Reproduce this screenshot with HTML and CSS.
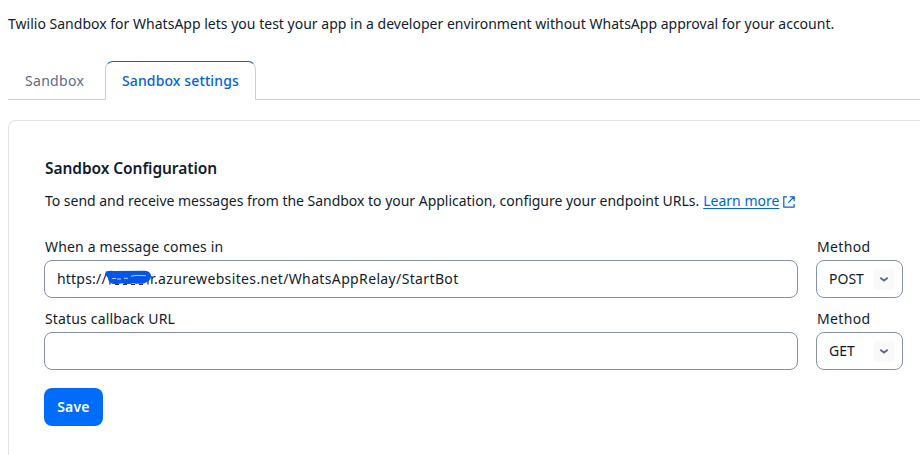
FILE: index.html
```html
<!DOCTYPE html>
<html lang="en">
<head>
<meta charset="utf-8">
<title>Sandbox settings</title>
<link rel="stylesheet" href="styles.css">
</head>
<body>
<main class="page">
  <p class="intro">Twilio Sandbox for WhatsApp lets you test your app in a developer environment without WhatsApp approval for your account.</p>
  <nav class="tabs">
    <a class="tab">Sandbox</a>
    <a class="tab tab-active">Sandbox settings</a>
  </nav>
  <section class="card">
    <h2 class="title">Sandbox Configuration</h2>
    <p class="help"><span class="help-text">To send and receive messages from the Sandbox to your Application, configure your endpoint URLs.</span><a class="link">Learn more</a><svg class="external" viewBox="0 0 12 12" width="12" height="12" fill="none" stroke="currentColor" stroke-width="1.2"><path d="M4 .9H.8v10.3h10.3V8M6.800.8h4.400v4.400M11 1 5.300 6.700"/></svg></p>
    <div class="row">
      <div class="field">
        <label class="label">When a message comes in</label>
        <div class="control"><span class="scheme">https://</span><span class="redacted"><svg class="scribble" viewBox="0 0 48 17" width="48" height="17"><path fill="none" stroke="#26324a" stroke-width="1.3" d="M5 11v3.500M10 14.300h4M18 14.300h4M26 14.300h4M34 14.300h4M43 9v5.500"/><path fill="#0455e8" d="M1 1.500Q4 .5 9 1L40 .8Q46 1.500 46 6 46 10 42 12L38 13.800H31L28 13 25 14H20L17 13.200 13 14H8Q3 12 3 8L0 4Z"/><path fill="none" stroke="#c9dcff" stroke-width=".9" d="M7 8.500h4m1 .5h4m3-.7h4M26 6.200l5-.8 10 .3"/></svg></span><span class="host">r.azurewebsites.net/WhatsAppRelay/StartBot</span></div>
      </div>
      <div class="method">
        <label class="label label-method">Method</label>
        <div class="control select"><span>POST</span><span class="chevron"><svg viewBox="0 0 20 20" width="20" height="20"><path d="m6.900 9.200 3.100 2.400 3.100-2.400"/></svg></span></div>
      </div>
    </div>
    <div class="row">
      <div class="field">
        <label class="label">Status callback URL</label>
        <div class="control"></div>
      </div>
      <div class="method">
        <label class="label label-method">Method</label>
        <div class="control select"><span>GET</span><span class="chevron"><svg viewBox="0 0 20 20" width="20" height="20"><path d="m6.900 9.200 3.100 2.400 3.100-2.400"/></svg></span></div>
      </div>
    </div>
    <button class="save">Save</button>
  </section>
</main>
</body>
</html>
```
FILE: styles.css
```css
* { box-sizing: border-box; }
body {
  margin: 0;
  height: 455px;
  overflow: hidden;
  background: #fff;
  color: #121c2d;
  font: 14px/20px "Noto Sans", "Open Sans", sans-serif;
  white-space: nowrap;
}
.page { padding: 14px 0 0 8px; }
p, h2 { margin: 0; }
.intro { height: 47px; letter-spacing: .012px; }
.tabs {
  display: flex;
  height: 39px;
  border-bottom: 1px solid #cacdd8;
}
.tab {
  width: 97px;
  height: 39px;
  padding: 10px 0 0 17px;
  color: #606b85;
  letter-spacing: .3px;
}
.tab-active {
  width: 151px;
  padding: 9px 0 0 16px;
  border: 1px solid #cacdd8;
  border-top-color: #0263e0;
  border-bottom-color: #fff;
  border-radius: 8px 8px 0 0;
  background: #fff;
  color: #0263e0;
  font-weight: 500;
  letter-spacing: .12px;
}
.card {
  margin: 20px -20px 0 0;
  height: 335px;
  padding: 37px 36px 0 35px;
  border: 1px solid #e1e3ea;
  border-bottom: 0;
  border-radius: 8px 8px 0 0;
}
.title { padding-left: 1px; font-size: 15.5px; font-weight: 600; line-height: 20px; letter-spacing: -.07px; }
.help { display: flex; height: 46px; margin: 13px 0 0 1px; }
.help-text { letter-spacing: -.02px; }
.link { margin-left: 4px; color: #0263e0; text-decoration: underline; text-underline-offset: 2px; text-decoration-thickness: 1px; }
.external { margin: 5px 0 0 4px; color: #0263e0; }
.row { display: flex; gap: 18px; height: 72px; }
.field { flex: 1; }
.method { width: 87px; }
.label { display: block; height: 23px; padding-left: 1px; letter-spacing: .16px; }
.label-method { letter-spacing: .35px; }
.control {
  display: flex;
  align-items: center;
  height: 38px;
  padding: 0 12px;
  border: 1px solid #8891aa;
  border-radius: 8px;
}
.scheme { width: 49px; letter-spacing: .2px; }
.redacted { width: 44px; height: 17px; }
.scribble { display: block; margin: -1px 0 0 -1px; }
.host { letter-spacing: .36px; }
.select { justify-content: space-between; padding: 0 8px 0 12px; }
.chevron { width: 20px; height: 20px; border-radius: 4px; background: #f9f9fa; }
.chevron svg { display: block; }
.chevron path { fill: none; stroke: #606b85; stroke-width: 2; stroke-linecap: round; }
.save {
  display: block;
  width: 59px;
  height: 38px;
  margin-top: 7px;
  padding: 0;
  border: 0;
  border-radius: 8px;
  background: #006dfa;
  color: #fff;
  font: 600 14px/20px "Noto Sans", "Open Sans", sans-serif;
  letter-spacing: .2px;
}
```
